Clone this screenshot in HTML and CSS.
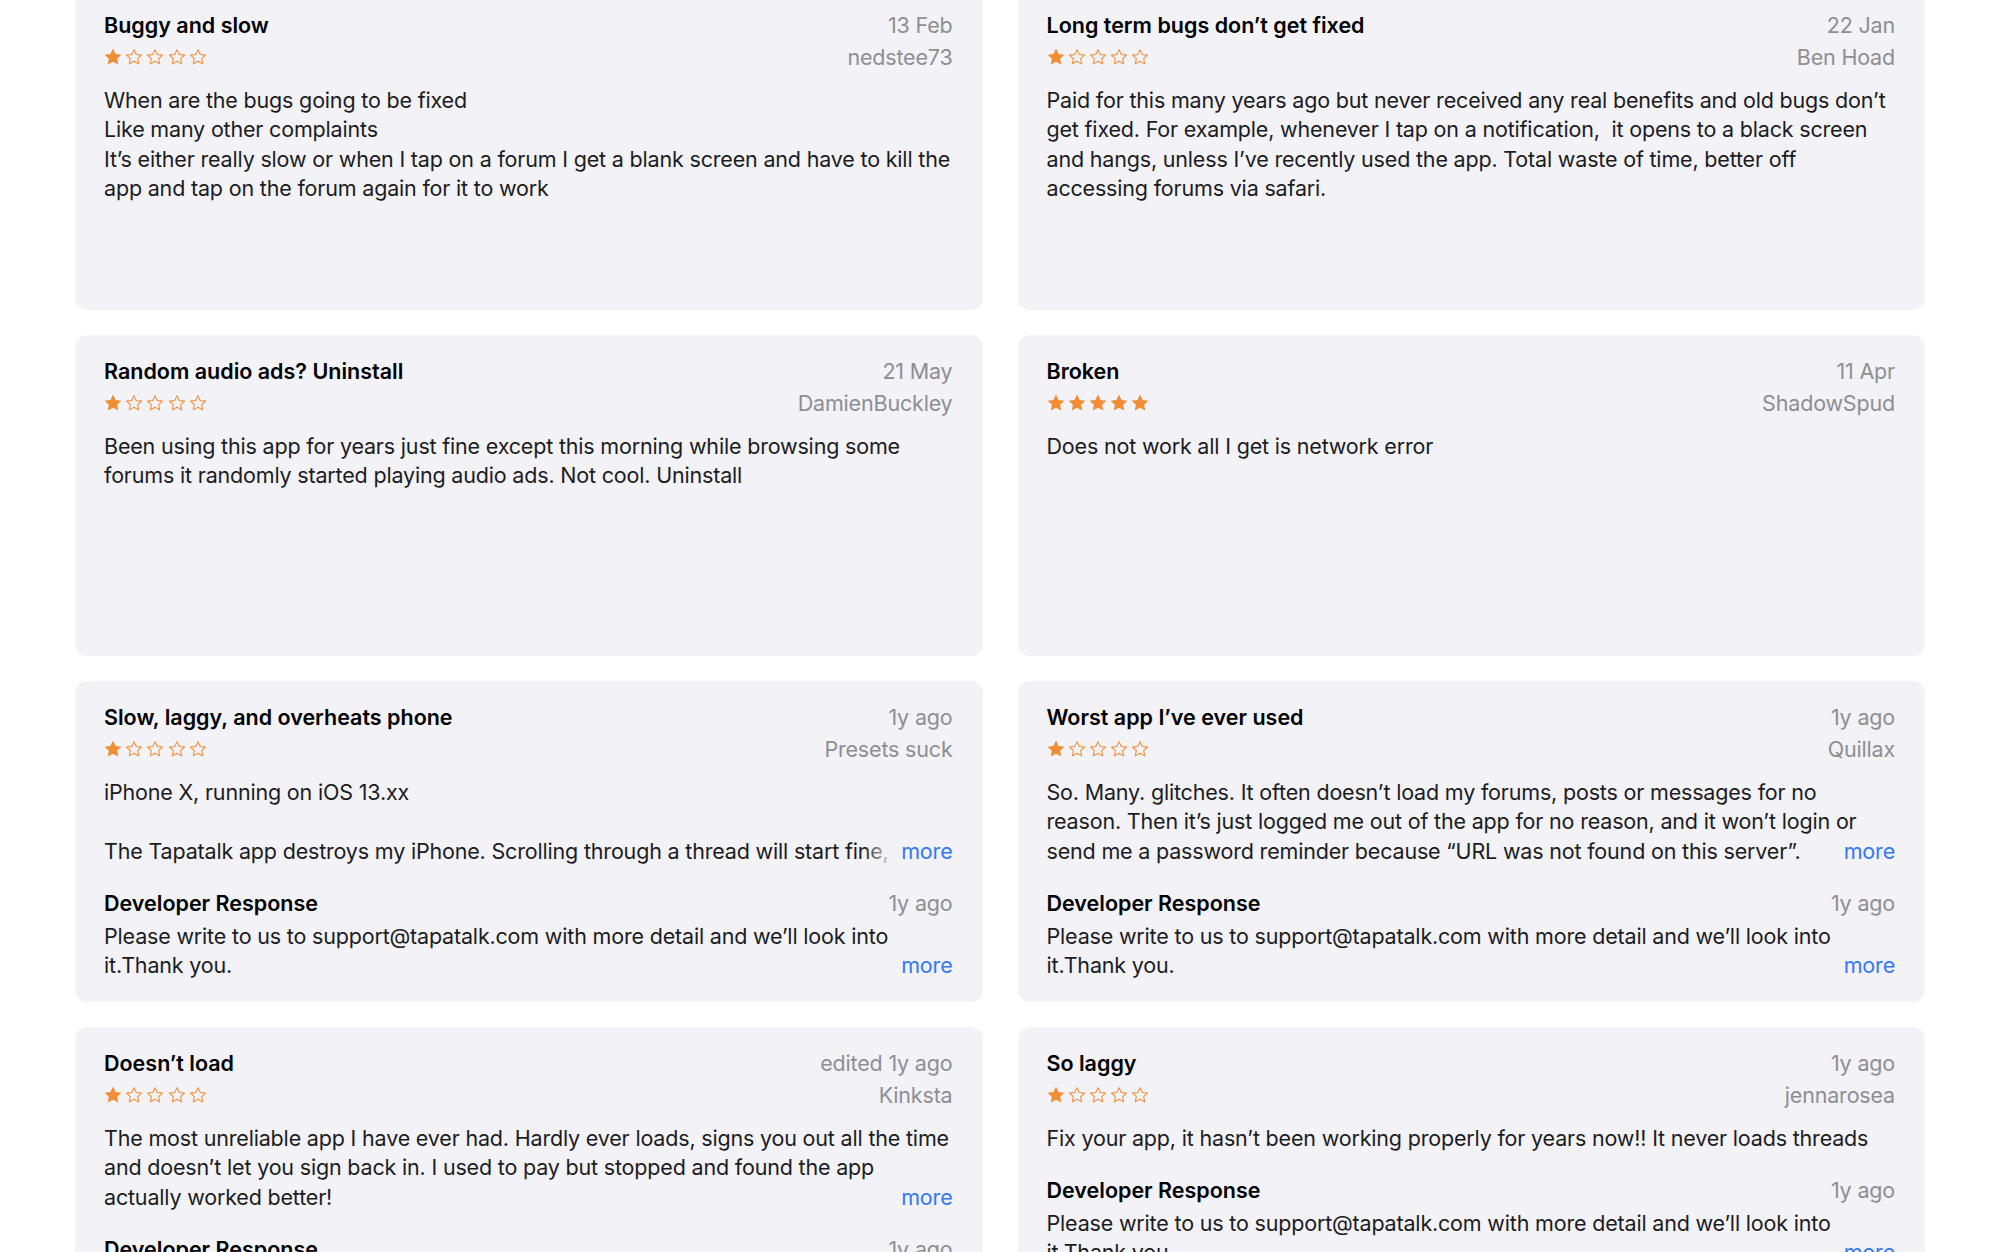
FILE: index.html
```html
<!DOCTYPE html>
<html lang="en">

<head>
    <meta charset="UTF-8">
    <meta name="viewport" content="width=device-width, initial-scale=1.0">
    <title>Ratings &amp; Reviews</title>
    <link rel="stylesheet" href="styles.css">
</head>

<body>
    <svg class="defs" aria-hidden="true">
        <symbol id="star-full" viewBox="0 0 24 24">
            <path d="M12 .8l3.4 7.1 7.8 1-5.7 5.4 1.5 7.7L12 18.2l-7 3.8 1.5-7.7L.8 8.9l7.8-1z" fill="currentColor"/>
        </symbol>
        <symbol id="star-empty" viewBox="0 0 24 24">
            <path d="M12 2.2l3 6.4 7 .9-5.1 4.8 1.3 6.9L12 17.7l-6.2 3.5 1.3-6.9L2 9.5l7-.9z" fill="none" stroke="currentColor" stroke-width="1.4" stroke-linejoin="round"/>
        </symbol>
    </svg>

    <main class="reviews">
        <article class="review">
            <header class="review-head">
                <div>
                    <h2 class="review-title">Buggy and slow</h2>
                    <div class="stars">
                        <svg><use href="#star-full"/></svg><svg><use href="#star-empty"/></svg><svg><use href="#star-empty"/></svg><svg><use href="#star-empty"/></svg><svg><use href="#star-empty"/></svg>
                    </div>
                </div>
                <div class="review-meta">
                    <div>13 Feb</div>
                    <div>nedstee73</div>
                </div>
            </header>
            <p class="review-body">When are the bugs going to be fixed<br>Like many other complaints<br>It’s either really slow or when I tap on a forum I get a blank screen and have to kill the app and tap on the forum again for it to work</p>
        </article>

        <article class="review">
            <header class="review-head">
                <div>
                    <h2 class="review-title">Long term bugs don’t get fixed</h2>
                    <div class="stars">
                        <svg><use href="#star-full"/></svg><svg><use href="#star-empty"/></svg><svg><use href="#star-empty"/></svg><svg><use href="#star-empty"/></svg><svg><use href="#star-empty"/></svg>
                    </div>
                </div>
                <div class="review-meta">
                    <div>22 Jan</div>
                    <div>Ben Hoad</div>
                </div>
            </header>
            <p class="review-body">Paid for this many years ago but never received any real benefits and old bugs don’t get fixed. For example, whenever I tap on a notification,&nbsp; it opens to a black screen and hangs, unless I’ve recently used the app. Total waste of time, better off accessing forums via safari.</p>
        </article>

        <article class="review">
            <header class="review-head">
                <div>
                    <h2 class="review-title">Random audio ads? Uninstall</h2>
                    <div class="stars">
                        <svg><use href="#star-full"/></svg><svg><use href="#star-empty"/></svg><svg><use href="#star-empty"/></svg><svg><use href="#star-empty"/></svg><svg><use href="#star-empty"/></svg>
                    </div>
                </div>
                <div class="review-meta">
                    <div>21 May</div>
                    <div>DamienBuckley</div>
                </div>
            </header>
            <p class="review-body">Been using this app for years just fine except this morning while browsing some forums it randomly started playing audio ads. Not cool. Uninstall</p>
        </article>

        <article class="review">
            <header class="review-head">
                <div>
                    <h2 class="review-title">Broken</h2>
                    <div class="stars">
                        <svg><use href="#star-full"/></svg><svg><use href="#star-full"/></svg><svg><use href="#star-full"/></svg><svg><use href="#star-full"/></svg><svg><use href="#star-full"/></svg>
                    </div>
                </div>
                <div class="review-meta">
                    <div>11 Apr</div>
                    <div>ShadowSpud</div>
                </div>
            </header>
            <p class="review-body">Does not work all I get is network error</p>
        </article>

        <article class="review">
            <header class="review-head">
                <div>
                    <h2 class="review-title">Slow, laggy, and overheats phone</h2>
                    <div class="stars">
                        <svg><use href="#star-full"/></svg><svg><use href="#star-empty"/></svg><svg><use href="#star-empty"/></svg><svg><use href="#star-empty"/></svg><svg><use href="#star-empty"/></svg>
                    </div>
                </div>
                <div class="review-meta">
                    <div>1y ago</div>
                    <div>Presets suck</div>
                </div>
            </header>
            <p class="review-body">iPhone X, running on iOS 13.xx<br><br>The Tapatalk app destroys my iPhone. Scrolling through a thread will start fine,<a class="more" href="#">more</a></p>
            <section class="response">
                <div class="response-head">
                    <h3 class="response-title">Developer Response</h3>
                    <span class="response-date">1y ago</span>
                </div>
                <p class="response-body">Please write to us to support@tapatalk.com with more detail and we’ll look into<br>it.Thank you.<a class="more" href="#">more</a></p>
            </section>
        </article>

        <article class="review">
            <header class="review-head">
                <div>
                    <h2 class="review-title">Worst app I’ve ever used</h2>
                    <div class="stars">
                        <svg><use href="#star-full"/></svg><svg><use href="#star-empty"/></svg><svg><use href="#star-empty"/></svg><svg><use href="#star-empty"/></svg><svg><use href="#star-empty"/></svg>
                    </div>
                </div>
                <div class="review-meta">
                    <div>1y ago</div>
                    <div>Quillax</div>
                </div>
            </header>
            <p class="review-body">So. Many. glitches. It often doesn’t load my forums, posts or messages for no reason. Then it’s just logged me out of the app for no reason, and it won’t login or send me a password reminder because “URL was not found on this server”.<a class="more" href="#">more</a></p>
            <section class="response">
                <div class="response-head">
                    <h3 class="response-title">Developer Response</h3>
                    <span class="response-date">1y ago</span>
                </div>
                <p class="response-body">Please write to us to support@tapatalk.com with more detail and we’ll look into<br>it.Thank you.<a class="more" href="#">more</a></p>
            </section>
        </article>

        <article class="review">
            <header class="review-head">
                <div>
                    <h2 class="review-title">Doesn’t load</h2>
                    <div class="stars">
                        <svg><use href="#star-full"/></svg><svg><use href="#star-empty"/></svg><svg><use href="#star-empty"/></svg><svg><use href="#star-empty"/></svg><svg><use href="#star-empty"/></svg>
                    </div>
                </div>
                <div class="review-meta">
                    <div>edited 1y ago</div>
                    <div>Kinksta</div>
                </div>
            </header>
            <p class="review-body">The most unreliable app I have ever had. Hardly ever loads, signs you out all the time and doesn’t let you sign back in. I used to pay but stopped and found the app actually worked better!<a class="more" href="#">more</a></p>
            <section class="response">
                <div class="response-head">
                    <h3 class="response-title">Developer Response</h3>
                    <span class="response-date">1y ago</span>
                </div>
                <p class="response-body">Please write to us to support@tapatalk.com with more detail and we’ll look into<br>it.Thank you.<a class="more" href="#">more</a></p>
            </section>
        </article>

        <article class="review">
            <header class="review-head">
                <div>
                    <h2 class="review-title">So laggy</h2>
                    <div class="stars">
                        <svg><use href="#star-full"/></svg><svg><use href="#star-empty"/></svg><svg><use href="#star-empty"/></svg><svg><use href="#star-empty"/></svg><svg><use href="#star-empty"/></svg>
                    </div>
                </div>
                <div class="review-meta">
                    <div>1y ago</div>
                    <div>jennarosea</div>
                </div>
            </header>
            <p class="review-body">Fix your app, it hasn’t been working properly for years now!! It never loads threads</p>
            <section class="response">
                <div class="response-head">
                    <h3 class="response-title">Developer Response</h3>
                    <span class="response-date">1y ago</span>
                </div>
                <p class="response-body">Please write to us to support@tapatalk.com with more detail and we’ll look into<br>it.Thank you.<a class="more" href="#">more</a></p>
            </section>
        </article>
    </main>
</body>

</html>
```

FILE: styles.css
```css
body {
    margin: 0;
    padding: 0;
    background-color: #fff;
    color: #1c1c1e;
    font-family: Inter, "Noto Sans", sans-serif;
    font-size: 21.5px;
    letter-spacing: -0.18px;
    overflow: hidden;
}

.defs {
    display: none;
}

.reviews {
    display: grid;
    grid-template-columns: 1fr 1fr;
    gap: 25px 35px;
    padding: 0 75px;
    margin-top: -11px;
}

.review {
    height: 321px;
    overflow: hidden;
    background-color: #f2f2f7;
    border-radius: 12px;
    padding: 20px 30px 0 29px;
    box-sizing: border-box;
}

.review-head {
    display: flex;
    justify-content: space-between;
    line-height: 32px;
}

.review-title {
    margin: 0;
    font-size: 21.5px;
    font-weight: 600;
    letter-spacing: 0;
    color: #000;
}

.stars {
    display: flex;
    align-items: center;
    gap: 3.2px;
    height: 32px;
    color: #f08d35;
}

.stars svg {
    width: 18px;
    height: 18px;
}

.review-meta {
    text-align: right;
    color: #8e8e93;
}

.review-body,
.response-body {
    position: relative;
    margin: 13px 0 0;
    line-height: 29.3px;
}

.more {
    position: absolute;
    right: 0;
    bottom: 0;
    padding-left: 38px;
    color: #3478f6;
    text-decoration: none;
    background: linear-gradient(to right, rgba(242, 242, 247, 0), #f2f2f7 32px);
}

.response {
    margin-top: 23px;
}

.response-head {
    display: flex;
    justify-content: space-between;
    line-height: 29.3px;
}

.response-title {
    margin: 0;
    font-size: 21.5px;
    font-weight: 600;
    letter-spacing: 0;
    color: #000;
}

.response-date {
    color: #8e8e93;
}

.response-body {
    margin-top: 3.5px;
}
```
